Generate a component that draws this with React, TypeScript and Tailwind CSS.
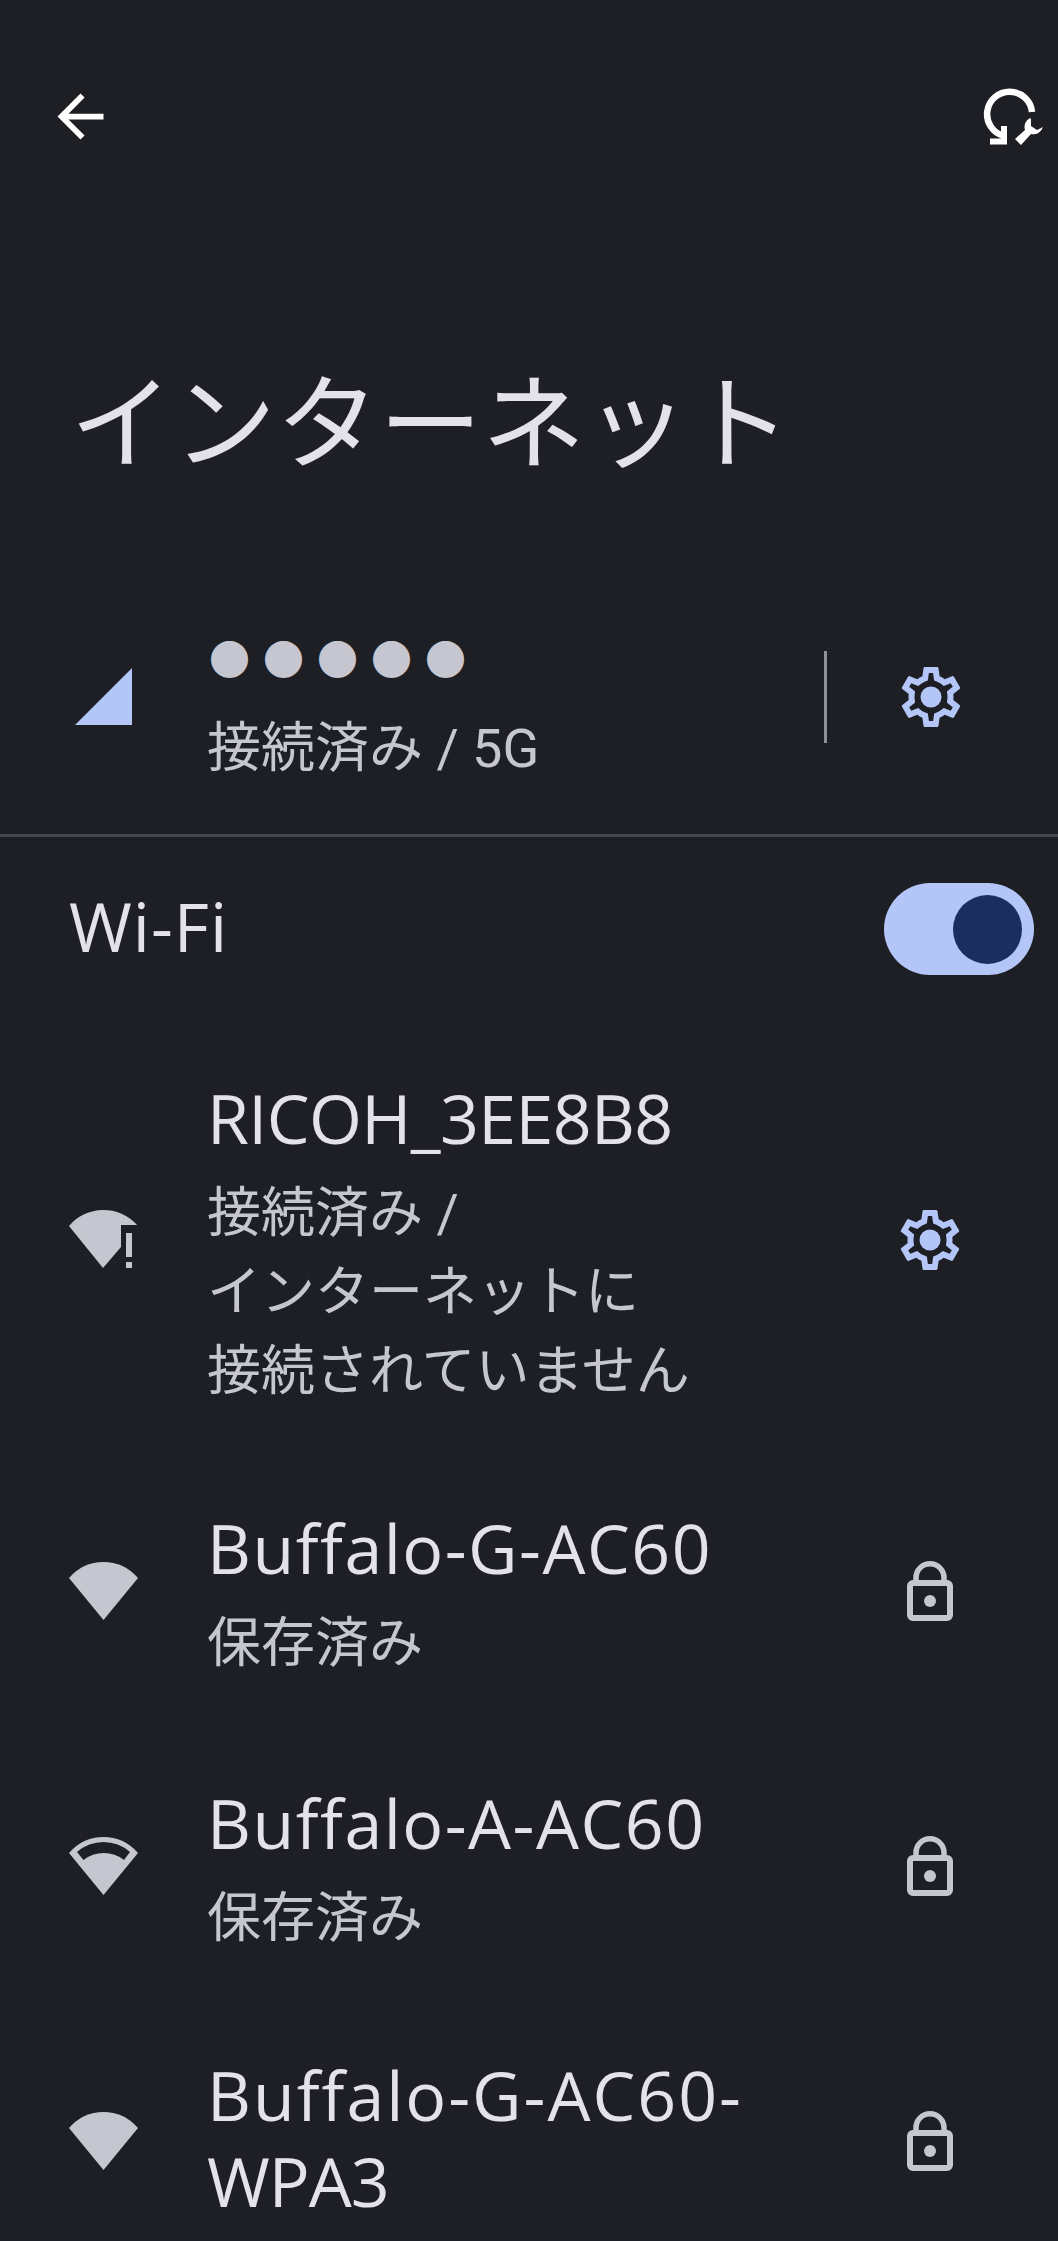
import type { ReactNode } from "react";

const FONT = "font-['Roboto','Noto_Sans_CJK_JP',sans-serif]";
const TITLE_FONT = "font-['Open_Sans','Noto_Sans_CJK_JP',sans-serif]";

function BackIcon() {
  return (
    <svg viewBox="0 0 24 24" className="h-[69px] w-[69px] fill-white">
      <path d="M20 11H7.83l5.59-5.59L12 4l-8 8 8 8 1.41-1.41L7.83 13H20v-2z" />
    </svg>
  );
}

function RepairIcon() {
  return (
    <svg viewBox="0 0 70 70" className="h-[70px] w-[70px] text-white">
      <path d="M52 31A22.500 22.500 0 1 0 24 55" fill="none" stroke="currentColor" strokeWidth="6.5" />
      <path d="M24 45V60.500H10" fill="none" stroke="currentColor" strokeWidth="6" />
      <path
        d="M50 37a10 10 0 0 0-5 12L35 58l6 6 10-11a10 10 0 0 0 12-7l-6 3-6-4v-7z"
        fill="currentColor"
      />
    </svg>
  );
}

function GearIcon() {
  return (
    <svg viewBox="0 0 24 24" className="h-[72px] w-[72px] fill-[#b4c6f8]">
      <path d="M19.43 12.98c.04-.32.07-.64.07-.98 0-.34-.03-.66-.07-.98l2.11-1.65c.19-.15.24-.42.12-.64l-2-3.46c-.09-.16-.26-.25-.44-.25-.06 0-.12.01-.17.03l-2.49 1c-.52-.4-1.08-.73-1.69-.98l-.38-2.65C14.46 2.18 14.25 2 14 2h-4c-.25 0-.46.18-.49.42l-.38 2.65c-.61.25-1.17.59-1.69.98l-2.49-1c-.06-.02-.12-.03-.18-.03-.17 0-.34.09-.43.25l-2 3.46c-.13.22-.07.49.12.64l2.11 1.65c-.04.32-.07.65-.07.98 0 .33.03.66.07.98l-2.11 1.65c-.19.15-.24.42-.12.64l2 3.46c.09.16.26.25.44.25.06 0 .12-.01.17-.03l2.49-1c.52.4 1.08.73 1.69.98l.38 2.65c.03.24.24.42.49.42h4c.25 0 .46-.18.49-.42l.38-2.65c.61-.25 1.17-.59 1.69-.98l2.49 1c.06.02.12.03.18.03.17 0 .34-.09.43-.25l2-3.46c.12-.22.07-.49-.12-.64l-2.11-1.65zm-1.98-1.71c.04.31.05.52.05.73 0 .21-.02.43-.05.73l-.14 1.13.89.7 1.08.84-.7 1.21-1.27-.51-1.04-.42-.9.68c-.43.32-.84.56-1.25.73l-1.06.43-.16 1.13-.2 1.35h-1.4l-.19-1.35-.16-1.13-1.06-.43c-.43-.18-.83-.41-1.23-.71l-.91-.7-1.06.43-1.27.51-.7-1.21 1.08-.84.89-.7-.14-1.13c-.03-.31-.05-.54-.05-.74s.02-.43.05-.73l.14-1.13-.89-.7-1.08-.84.7-1.21 1.27.51 1.04.42.9-.68c.43-.32.84-.56 1.25-.73l1.06-.43.16-1.13.2-1.35h1.39l.19 1.35.16 1.13 1.06.43c.43.18.83.41 1.23.71l.91.7 1.06-.43 1.27-.51.7 1.21-1.07.85-.89.7.14 1.13z" />
      <circle cx="12" cy="12" r="3.5" />
    </svg>
  );
}

function LockIcon() {
  return (
    <svg viewBox="0 0 60 72" className="h-[72px] w-[60px] text-[#c6c6d0]">
      <path d="M16 28v-5.250a14 14 0 0 1 28 0V28" fill="none" stroke="currentColor" strokeWidth="5.5" />
      <rect x="10" y="28" width="40" height="35" rx="3" fill="none" stroke="currentColor" strokeWidth="6" />
      <circle cx="30" cy="46" r="6" fill="currentColor" />
    </svg>
  );
}

// signal: 4 = full wedge, 3 = wedge with the outer band cut out, "alert" = no internet
function WifiIcon({ signal }: { signal: 3 | 4 | "alert" }) {
  return (
    <svg viewBox="0 0 72 62" className="h-[62px] w-[72px] fill-[#c6c6d0]">
      {signal === 4 && <path d="M35.500 60 1 18A45 45 0 0 1 70 18Z" />}
      {signal === 3 && (
        <path
          fillRule="evenodd"
          d="M35.500 60 1 18A45 45 0 0 1 70 18ZM9 17l6.500 8A33 33 0 0 1 56 25l6-8A40 40 0 0 0 9 17Z"
        />
      )}
      {signal === "alert" && (
        <>
          <path d="M35 59 1 17A45 45 0 0 1 69 16H53V38Z" />
          <rect x="58" y="24" width="6" height="24" />
          <rect x="58" y="53" width="6" height="6" />
        </>
      )}
    </svg>
  );
}

function NetworkRow({
  icon,
  title,
  trailing,
  children,
  height,
  tracking = "tracking-[1.5px]",
}: {
  icon: ReactNode;
  title: ReactNode;
  trailing: ReactNode;
  children?: ReactNode;
  height: string;
  tracking?: string;
}) {
  return (
    <div className={`flex shrink-0 items-center ${height}`}>
      <div className="flex w-[207px] shrink-0 pl-[68px]">{icon}</div>
      <div className={`w-[640px] shrink-0 ${children ? "pt-[6px]" : "pb-[5px]"}`}>
        <div className={`text-[68px] leading-[86px] text-[#e3e2e9] ${tracking} ${TITLE_FONT}`}>{title}</div>
        {children}
      </div>
      <div className="flex w-[165px] shrink-0 justify-center">{trailing}</div>
    </div>
  );
}

function Subtitle({ children }: { children: ReactNode }) {
  return <div className="mt-[13px] text-[54px] leading-[79px] text-[#c6c6d0]">{children}</div>;
}

export default function App() {
  return (
    <div className={`flex h-[2241px] w-[1058px] flex-col overflow-hidden bg-[#1e1f25] ${FONT}`}>
      <div className="flex h-[232px] shrink-0 items-center justify-between pl-[46px] pr-[8px]">
        <BackIcon />
        <RepairIcon />
      </div>

      <div className="h-[327px] shrink-0 pl-[70px] pt-[144px]">
        <h1 className="text-[103px] font-normal leading-[100px] text-[#e3e2e9]">インターネット</h1>
      </div>

      {/* mobile network */}
      <div className="flex h-[275px] shrink-0 items-center">
        <div className="flex w-[207px] shrink-0 justify-end pr-[75px]">
          <svg viewBox="0 0 57 57" className="h-[57px] w-[57px] fill-[#b4c6f8]">
            <path d="M57 0V57H0Z" />
          </svg>
        </div>
        <div className="w-[617px] shrink-0 pt-[16px]">
          <div className="pl-[2px] text-[41px] leading-[80px] tracking-[13px] text-[#c6c6d0]">●●●●●</div>
          <div className="mt-[8px] text-[54px] leading-[79px] text-[#c6c6d0]">接続済み / 5G</div>
        </div>
        <div className="h-[92px] w-[3px] shrink-0 bg-[#8f9099]" />
        <div className="flex w-[206px] shrink-0 justify-center pl-[2px]">
          <GearIcon />
        </div>
      </div>

      <div className="h-[3px] shrink-0 bg-[#46474f]" />

      {/* wifi toggle */}
      <div className="flex h-[189px] shrink-0 items-center justify-between pb-[5px] pl-[69px] pr-[24px]">
        <span className={`pb-[6px] text-[68px] tracking-[1px] text-[#e3e2e9] ${TITLE_FONT}`}>Wi-Fi</span>
        <div className="flex h-[92px] w-[150px] items-center justify-end rounded-full bg-[#b4c6f8] pr-[12px]">
          <div className="h-[69px] w-[69px] rounded-full bg-[#1a2e5f]" />
        </div>
      </div>

      <NetworkRow
        height="h-[427px]"
        icon={<WifiIcon signal="alert" />}
        title="RICOH_3EE8B8"
        tracking="tracking-[-0.6px]"
        trailing={<GearIcon />}
      >
        <Subtitle>
          接続済み /
          <br />
          インターネットに
          <br />
          接続されていません
        </Subtitle>
      </NetworkRow>
      <NetworkRow height="h-[275px]" icon={<WifiIcon signal={4} />} title="Buffalo-G-AC60" trailing={<LockIcon />}>
        <Subtitle>保存済み</Subtitle>
      </NetworkRow>
      <NetworkRow height="h-[275px]" icon={<WifiIcon signal={3} />} title="Buffalo-A-AC60" trailing={<LockIcon />}>
        <Subtitle>保存済み</Subtitle>
      </NetworkRow>
      <NetworkRow
        height="h-[275px]"
        icon={<WifiIcon signal={4} />}
        tracking="tracking-[2px]"
        title={
          <>
            Buffalo-G-AC60-<span className="tracking-[-1px]">WPA3</span>
          </>
        }
        trailing={<LockIcon />}
      />
    </div>
  );
}
